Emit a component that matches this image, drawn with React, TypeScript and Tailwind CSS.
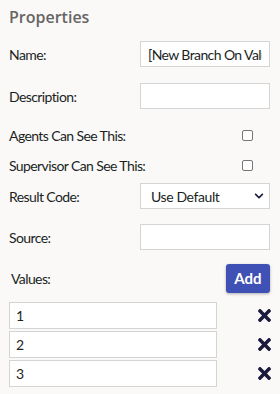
import React from 'react';
import { FaTimes, FaChevronDown } from 'react-icons/fa';

const inputCls =
  'h-[26px] w-[130px] border border-[#d4d4d4] bg-white px-[7px] text-[14px] tracking-[-0.6px] text-[#201f1e] outline-none';

function Row({ label, children, className }: { label: string; children: React.ReactNode; className: string }) {
  return (
    <div className={`flex items-center justify-between ${className}`}>
      <span className="text-[14px] tracking-[-0.6px] text-[#201f1e]">{label}</span>
      {children}
    </div>
  );
}

function Checkbox() {
  return <span className="mr-[17px] block h-[11px] w-[11px] rounded-[2px] border border-[#767676] bg-white" />;
}

export default function App() {
  const values = ['1', '2', '3'];
  return (
    <div className="min-h-[394px] w-[280px] bg-[#faf9f8] pl-[9px] pr-[10px] pt-[7px] font-['Lato',sans-serif]">
      <h2 className="font-['Open_Sans',sans-serif] text-[16px] font-semibold leading-[20px] text-[#666564]">Properties</h2>

      <Row label="Name:" className="mt-[14px] h-[26px]">
        <input className={inputCls} defaultValue="[New Branch On Value]" />
      </Row>
      <Row label="Description:" className="mt-[16px] h-[26px]">
        <input className={inputCls} />
      </Row>
      <Row label="Agents Can See This:" className="mt-[16px] h-[20px]">
        <Checkbox />
      </Row>
      <Row label="Supervisor Can See This:" className="mt-[10px] h-[20px]">
        <Checkbox />
      </Row>
      <Row label="Result Code:" className="mt-[8px] h-[26px]">
        <div className="flex h-[26px] w-[130px] items-center justify-between border border-[#d4d4d4] bg-white pl-[10px] pr-[5px]">
          <span className="text-[14px] tracking-[-0.4px] text-[#201f1e]">Use Default</span>
          <FaChevronDown className="h-[10px] w-[10px] text-[#1b1a3d]" />
        </div>
      </Row>
      <Row label="Source:" className="mt-[15px] h-[26px]">
        <input className={inputCls} />
      </Row>

      <div className="mt-[14px] flex h-[29px] items-center justify-between pl-[2px]">
        <span className="text-[14px] tracking-[-0.6px] text-[#201f1e]">Values:</span>
        <button className="h-[29px] w-[44px] rounded-[3px] bg-[#3f51b5] text-[15px] font-bold text-white shadow-[0_1px_3px_rgba(0,0,0,0.3)]">
          Add
        </button>
      </div>

      <div className="mt-[9px] flex flex-col gap-[2px]">
        {values.map((v) => (
          <div key={v} className="flex items-center justify-between">
            <input className="h-[27px] w-[208px] border border-[#d4d4d4] bg-white px-[6px] text-[14px] text-[#201f1e] outline-none" defaultValue={v} />
            <FaTimes className="mr-[-1px] h-[19px] w-[13px] text-[#1b1a3d]" />
          </div>
        ))}
      </div>
    </div>
  );
}
